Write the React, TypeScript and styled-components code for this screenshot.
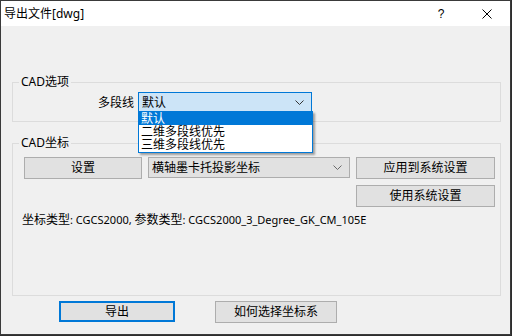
import React, {useState} from 'react';
import styled, {createGlobalStyle} from 'styled-components';

const GlobalStyle = createGlobalStyle`
  html, body {
    margin: 0;
    padding: 0;
    background: #2d2d2d;
  }
  body {
    font-family: "Noto Sans", "Noto Sans CJK SC", sans-serif;
    font-size: 12px;
    color: #000;
  }
`;

const polylineOptions = ['默认', '二维多段线优先', '三维多段线优先'];

export default function App() {
  const [selected] = useState(0);

  return (
      <>
        <GlobalStyle/>
        <Window>
          <TitleBar>
            <Title>导出文件[dwg]</Title>
            <TitleButton>?</TitleButton>
            <TitleButton>
              <svg width="10" height="10" viewBox="0 0 10 10">
                <path d="M0.5 0.5 L9.5 9.5 M9.5 0.5 L0.5 9.5" stroke="#000" strokeWidth="1" fill="none"/>
              </svg>
            </TitleButton>
          </TitleBar>
          <Body>
            <Group>
              <Legend>CAD选项</Legend>
              <FieldRow>
                <FieldLabel>多段线</FieldLabel>
                <ComboWrap>
                  <Combo $focused>
                    <ComboText>{polylineOptions[selected]}</ComboText>
                    <Chevron color="#333"/>
                  </Combo>
                  <DropList>
                    {polylineOptions.map((option, i) => (
                        <DropItem key={option} $active={i === selected}>{option}</DropItem>
                    ))}
                  </DropList>
                </ComboWrap>
              </FieldRow>
            </Group>

            <Group $height={160}>
              <Legend>CAD坐标</Legend>
              <CoordGrid>
                <Button>设置</Button>
                <Combo>
                  <ComboText>横轴墨卡托投影坐标</ComboText>
                  <Chevron color="#6a6a6a"/>
                </Combo>
                <Button>应用到系统设置</Button>
                <Button $col={3}>使用系统设置</Button>
              </CoordGrid>
              <Info>
                坐标类型<Latin>: CGCS2000, </Latin>参数类型<Latin>: CGCS2000_3_Degree_GK_CM_105E</Latin>
              </Info>
            </Group>

            <Footer>
              <FooterButton $width={116} $default>导出</FooterButton>
              <FooterButton $width={122}>如何选择坐标系</FooterButton>
            </Footer>
          </Body>
        </Window>
      </>
  );
}

function Chevron({color}: { color: string }) {
  return (
      <ChevronSvg width="9" height="5" viewBox="0 0 9 5">
        <polyline points="0.5,0.5 4.5,4.5 8.5,0.5" stroke={color} strokeWidth="1" fill="none"/>
      </ChevronSvg>
  );
}

const Window = styled.div`
  width: 511px;
  height: 335px;
  box-sizing: border-box;
  border: 1px solid #3a3a3a;
  background: #f0f0f0;
  display: flex;
  flex-direction: column;
`;

const TitleBar = styled.div`
  height: 25px;
  background: #fff;
  display: flex;
  align-items: center;
  padding-left: 3px;
`;

const Title = styled.div`
  flex: 1;
  font-size: 12px;
  line-height: 14px;
`;

const TitleButton = styled.div`
  width: 46px;
  height: 25px;
  display: flex;
  align-items: center;
  justify-content: center;
  font-family: "Liberation Sans", sans-serif;
  font-size: 12px;
`;

const Body = styled.div`
  flex: 1;
  padding: 49px 0 0 11px;
  display: flex;
  flex-direction: column;
`;

const Group = styled.fieldset<{ $height?: number }>`
  width: 489px;
  box-sizing: border-box;
  ${p => p.$height ? `height: ${p.$height}px;` : ''}
  margin: 0 0 14px;
  padding: 3px 6px 8px;
  border: 1px solid #dcdcdc;
  min-inline-size: 0;

  & + & {
    padding-top: 7px;
    margin-bottom: 5px;
  }
`;

const Legend = styled.legend`
  padding: 0 2px;
  font-size: 12px;
  line-height: 14px;
`;

const FieldRow = styled.div`
  display: grid;
  grid-template-columns: 115px 174px;
  column-gap: 4px;
  align-items: center;
`;

const FieldLabel = styled.div`
  text-align: right;
  line-height: 14px;
`;

const ComboWrap = styled.div`
  position: relative;
`;

const Combo = styled.div<{ $focused?: boolean }>`
  height: 21px;
  box-sizing: border-box;
  border: 1px solid ${p => p.$focused ? '#0078d7' : '#adadad'};
  background: ${p => p.$focused ? '#cce4f7' : '#e1e1e1'};
  display: flex;
  align-items: center;
  padding: 0 7px 0 3px;
`;

const ComboText = styled.span`
  flex: 1;
  line-height: 14px;
  white-space: nowrap;
`;

const ChevronSvg = styled.svg`
  display: block;
  flex: none;
`;

const DropList = styled.div`
  position: absolute;
  left: 0;
  top: 19px;
  width: 175px;
  box-sizing: border-box;
  border: 1px solid #0078d7;
  background: #fff;
  padding-bottom: 1px;
  box-shadow: 2px 2px 2px rgba(0, 0, 0, 0.35);
  z-index: 2;
`;

const DropItem = styled.div<{ $active?: boolean }>`
  height: 13px;
  line-height: 13px;
  padding-left: 2px;
  background: ${p => p.$active ? '#0078d7' : '#fff'};
  color: ${p => p.$active ? '#fff' : '#000'};
  white-space: nowrap;
`;

const CoordGrid = styled.div`
  display: grid;
  grid-template-columns: 118px 202px 139px;
  grid-auto-rows: 22px;
  column-gap: 6px;
  row-gap: 6px;
  padding-left: 5px;
`;

const Button = styled.div<{ $col?: number }>`
  ${p => p.$col ? `grid-column: ${p.$col};` : ''}
  box-sizing: border-box;
  border: 1px solid #adadad;
  background: #e1e1e1;
  display: flex;
  align-items: center;
  justify-content: center;
  line-height: 14px;
`;

const Info = styled.div`
  margin-top: 6px;
  padding-left: 3px;
  line-height: 14px;
  white-space: nowrap;
`;

const Latin = styled.span`
  font-size: 11px;
`;

const Footer = styled.div`
  display: flex;
  gap: 40px;
  padding-left: 47px;
`;

const FooterButton = styled.div<{ $width: number; $default?: boolean }>`
  width: ${p => p.$width}px;
  height: ${p => p.$default ? 21 : 22}px;
  box-sizing: border-box;
  border: ${p => p.$default ? '2px solid #0078d7' : '1px solid #adadad'};
  background: #e1e1e1;
  display: flex;
  align-items: center;
  justify-content: center;
  line-height: 14px;
`;
